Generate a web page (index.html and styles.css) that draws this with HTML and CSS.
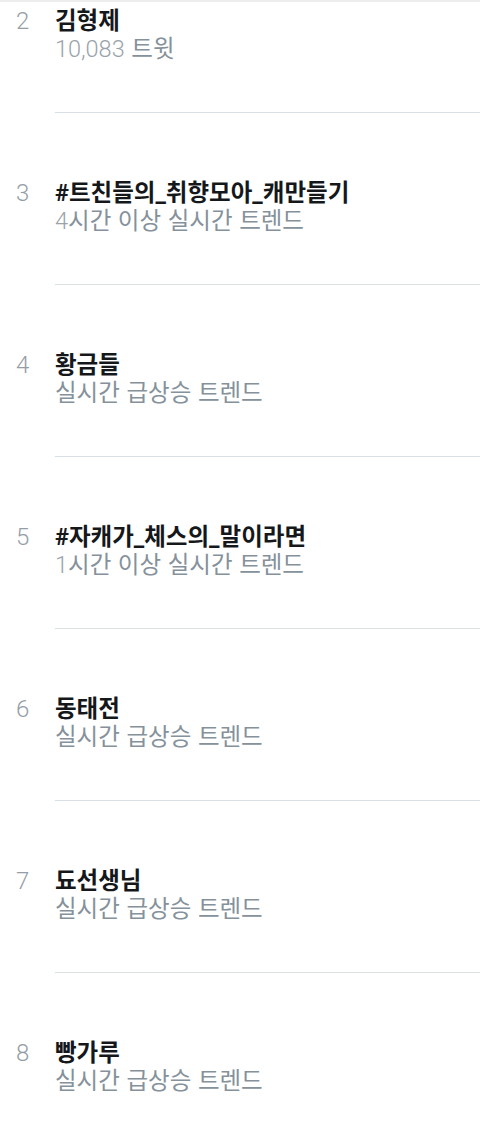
FILE: index.html
```html
<!DOCTYPE html>
<html lang="ko">
<head>
<meta charset="utf-8">
<title>트렌드</title>
<link rel="stylesheet" href="styles.css">
</head>
<body>
<div class="topbar"></div>
<ul class="trends">
  <li class="trend first">
    <span class="rank">2</span>
    <div class="body">
      <div class="title">김형제</div>
      <div class="meta"><span class="n">10,083</span> 트윗</div>
    </div>
  </li>
  <li class="trend">
    <span class="rank">3</span>
    <div class="body">
      <div class="title">#트친들의_취향모아_캐만들기</div>
      <div class="meta"><span class="n">4</span>시간 이상 실시간 트렌드</div>
    </div>
  </li>
  <li class="trend">
    <span class="rank">4</span>
    <div class="body">
      <div class="title">황금들</div>
      <div class="meta">실시간 급상승 트렌드</div>
    </div>
  </li>
  <li class="trend">
    <span class="rank">5</span>
    <div class="body">
      <div class="title">#자캐가_체스의_말이라면</div>
      <div class="meta"><span class="n">1</span>시간 이상 실시간 트렌드</div>
    </div>
  </li>
  <li class="trend">
    <span class="rank">6</span>
    <div class="body">
      <div class="title">동태전</div>
      <div class="meta">실시간 급상승 트렌드</div>
    </div>
  </li>
  <li class="trend">
    <span class="rank">7</span>
    <div class="body">
      <div class="title">됴선생님</div>
      <div class="meta">실시간 급상승 트렌드</div>
    </div>
  </li>
  <li class="trend">
    <span class="rank">8</span>
    <div class="body">
      <div class="title">빵가루</div>
      <div class="meta">실시간 급상승 트렌드</div>
    </div>
  </li>
</ul>
</body>
</html>
```
FILE: styles.css
```css
html, body {
  margin: 0;
  padding: 0;
  background: #ffffff;
}
body {
  width: 480px;
  height: 1125px;
  overflow: hidden;
  font-family: Roboto, "Noto Sans CJK KR", sans-serif;
}
.topbar {
  height: 2px;
  background: #ededed;
}
.trends {
  list-style: none;
  margin: 0;
  padding: 0;
}
.trend {
  display: flex;
  align-items: flex-start;
}
.rank {
  flex: 0 0 39px;
  height: 26px;
  padding-left: 16px;
  margin-top: 67px;
  font-family: Roboto, sans-serif;
  font-weight: 300;
  font-size: 24px;
  line-height: 26px;
  color: #959ea6;
}
.body {
  flex: 1;
  padding-top: 67px;
  padding-bottom: 52px;
  border-bottom: 1px solid #d8e0e5;
}
.trend.first .rank {
  margin-top: 6px;
}
.trend.first .body {
  padding-top: 6px;
}
.title {
  height: 26px;
  overflow: visible;
  font-family: Roboto, "Noto Sans CJK KR", sans-serif;
  font-weight: 700;
  font-size: 23.5px;
  line-height: 26px;
  color: #15181b;
  white-space: nowrap;
}
.meta {
  height: 26px;
  overflow: visible;
  font-family: "Noto Sans CJK KR", sans-serif;
  font-weight: 400;
  font-size: 23.5px;
  line-height: 26px;
  color: #85919b;
  white-space: nowrap;
}
.meta .n {
  font-family: Roboto, sans-serif;
  font-weight: 300;
  color: #9aa3ab;
}
```
